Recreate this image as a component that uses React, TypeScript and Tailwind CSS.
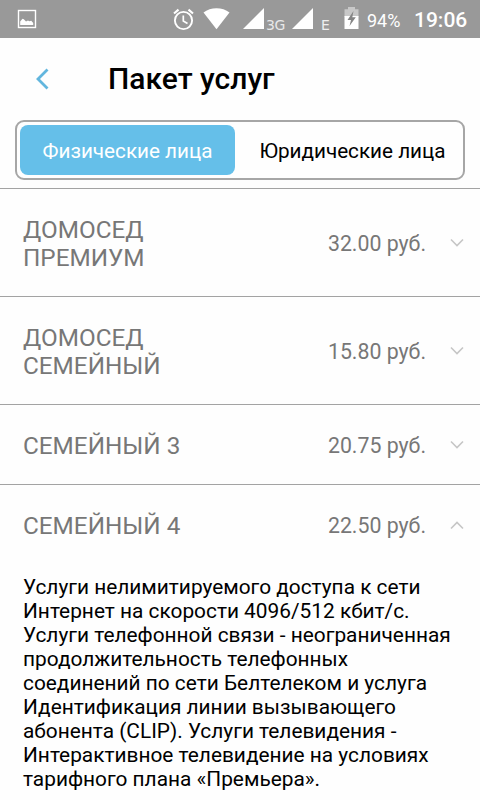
type Plan = { name: string[]; price: string; height: string; open?: boolean };

const plans: Plan[] = [
  { name: ['ДОМОСЕД', 'ПРЕМИУМ'], price: '32.00 руб.', height: 'h-[108px] border-b' },
  { name: ['ДОМОСЕД', 'СЕМЕЙНЫЙ'], price: '15.80 руб.', height: 'h-[108px] border-b' },
  { name: ['СЕМЕЙНЫЙ 3'], price: '20.75 руб.', height: 'h-20 border-b' },
  { name: ['СЕМЕЙНЫЙ 4'], price: '22.50 руб.', height: 'h-20', open: true },
];

const description = [
  'Услуги нелимитируемого доступа к сети',
  'Интернет на скорости 4096/512 кбит/с.',
  'Услуги телефонной связи - неограниченная',
  'продолжительность телефонных',
  'соединений по сети Белтелеком и услуга',
  'Идентификация линии вызывающего',
  'абонента (CLIP). Услуги телевидения -',
  'Интерактивное телевидение на условиях',
  'тарифного плана «Премьера».',
];

function StatusBar() {
  return (
    <header className="flex h-[38px] items-start bg-[#999999] text-white">
      <svg className="ml-[17px] mt-[9px] h-5 w-5" viewBox="0 0 20 20" fill="none">
        <rect x="1.5" y="1.5" width="17" height="17" stroke="white" strokeWidth="1.4" />
        <path d="M3.2 16V12.5L5.5 9.8L6.8 10.2L9 12.6L11 11.5L12.3 12.3L14.3 11.8L16.2 14V16Z" fill="white" />
      </svg>
      <svg className="ml-[136px] mt-2 h-[23px] w-[21px]" viewBox="0 0 21 23" fill="none" stroke="white">
        <circle cx="10.5" cy="12.5" r="8.6" strokeWidth="1.9" />
        <path d="M10.3 7.5V13L14.5 15.4" strokeWidth="1.7" />
        <path d="M1 5.5L5.5 1.6M20 5.5L15.5 1.6" strokeWidth="2.1" />
      </svg>
      <svg className="ml-[9px] mt-2 h-[22px] w-[27px]" viewBox="0 0 27 22" fill="white">
        <path d="M0.5 4.6C7.5 -1.2 19.5 -1.2 26.5 4.6L13.5 21.2Z" />
      </svg>
      <svg className="ml-[13px] mt-2 h-[21px] w-[22px]" viewBox="0 0 22 21" fill="white">
        <path d="M0 21L21 0V21Z" />
      </svg>
      <span className="ml-px mt-[17px] w-[21px] font-['DejaVu_Sans'] text-[14px] leading-4 tracking-tight text-[#e8e8e8]">3G</span>
      <svg className="ml-[5px] mt-2 h-[21px] w-[22px]" viewBox="0 0 22 21" fill="white">
        <path d="M0 21L21 0V21Z" />
      </svg>
      <span className="ml-[7px] mt-[17px] w-[10px] font-['DejaVu_Sans'] text-[14px] leading-4 text-[#eeeeee]">E</span>
      <svg className="ml-[13px] mt-[7px] h-[22px] w-[15px]" viewBox="0 0 15 22">
        <path d="M0.5 2.2H4V0H11V2.2H14.5V10H0.5Z" fill="#c8c8c8" />
        <path d="M0.5 9H14.5V22H0.5Z" fill="white" />
        <path d="M9.5 4L3.5 13H7L5.5 19L11.8 10.3H8.3Z" fill="#858585" />
      </svg>
      <span className="ml-[8px] mt-[9px] w-[34px] whitespace-nowrap text-[18px] leading-[23px]">94%</span>
      <span className="ml-[13px] mt-[7px] whitespace-nowrap text-[21px] font-medium leading-[26px]">19:06</span>
    </header>
  );
}

function Chevron({ open }: { open?: boolean }) {
  return (
    <svg className="mb-px ml-6 h-[10px] w-[14px]" viewBox="0 0 14 10" fill="none" stroke="#c6c6c6" strokeWidth="1.6">
      <path d={open ? 'M1 7.5L7 1.5L13 7.5' : 'M1 1.5L7 7.5L13 1.5'} />
    </svg>
  );
}

export default function App() {
  return (
    <div className="h-[800px] w-[480px] overflow-hidden bg-[#fefefe] font-[Roboto,sans-serif] text-black">
      <StatusBar />
      <div className="flex h-[82px] items-center">
        <svg className="ml-[36px] h-[22px] w-[13px]" viewBox="0 0 13 22" fill="none" stroke="#62b6de" strokeWidth="2.8">
          <path d="M11.5 1.5L2 11L11.5 20.5" />
        </svg>
        <h1 className="ml-[59px] whitespace-nowrap text-[30px] font-medium leading-9">Пакет услуг</h1>
      </div>
      <div className="mx-[15px] flex h-[60px] rounded-[9px] border-2 border-[#a6a6a6] p-[3px] text-[20.7px]">
        <button className="flex w-[215px] items-center justify-center whitespace-nowrap rounded-[8px] bg-[#65bfe9] pt-[3px] text-white">Физические лица</button>
        <button className="flex flex-1 items-center justify-center whitespace-nowrap pl-[10px] pt-[3px]">Юридические лица</button>
      </div>
      <main className="mt-2 border-t border-[#a3a3a3]">
        {plans.map((plan) => (
          <section key={plan.price} className={`flex items-center border-[#a3a3a3] pl-[23px] pr-4 pt-0.5 text-[#777777] ${plan.height}`}>
            <h2 className="flex-1 text-[24.3px] leading-7">
              {plan.name.map((line) => (
                <span key={line} className="block whitespace-nowrap">{line}</span>
              ))}
            </h2>
            <span className="whitespace-nowrap text-[21.3px] leading-6">{plan.price}</span>
            <Chevron open={plan.open} />
          </section>
        ))}
        <p className="pl-[23px] pt-[10px] text-[20.85px] leading-6">
          {description.map((line) => (
            <span key={line} className="block whitespace-nowrap">{line}</span>
          ))}
        </p>
      </main>
    </div>
  );
}
